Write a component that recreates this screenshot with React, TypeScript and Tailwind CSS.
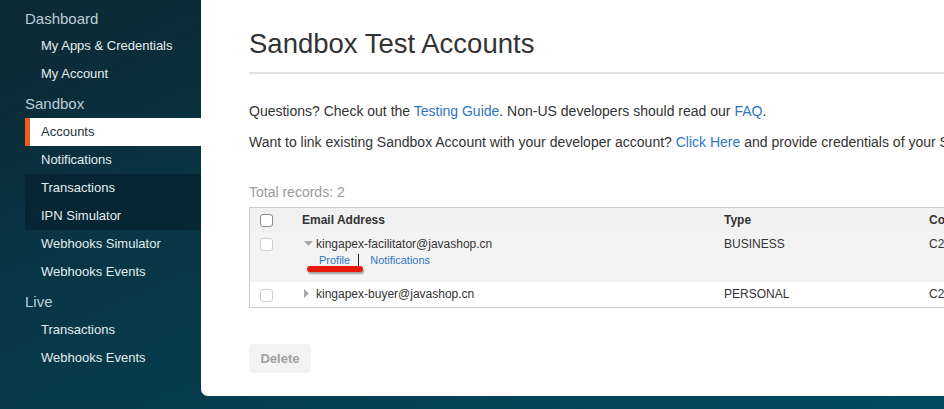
import React from "react";

const font = { fontFamily: '"Liberation Sans", Arial, sans-serif' };

function Header({ children, h }: { children: React.ReactNode; h: string }) {
  return (
    <div className={h + " flex items-center pl-[25px] text-[15px] text-[#bccfd7]"}>{children}</div>
  );
}

function Item({ children, active, dark }: { children: React.ReactNode; active?: boolean; dark?: boolean }) {
  if (active) {
    return (
      <div className="ml-[25px] h-[28px] flex items-center bg-white border-l-[5px] border-[#f05a1c] pl-[11px] text-[13px] text-[#1d3440]">
        {children}
      </div>
    );
  }
  return (
    <div
      className={
        "ml-[25px] h-[28px] flex items-center pl-[16px] text-[13px] text-[#e3ecef] " +
        (dark ? "bg-[#072532]/90" : "")
      }
    >
      {children}
    </div>
  );
}

function Checkbox({ strong }: { strong?: boolean }) {
  return (
    <div
      className={
        "w-[13px] h-[13px] rounded-[3px] bg-white border " +
        (strong ? "border-[#8a8a8a]" : "border-[#cfcfcf]")
      }
    />
  );
}

export default function App() {
  return (
    <div style={font} className="w-[944px] h-[409px] overflow-hidden flex bg-linear-to-br from-[#0c2833] via-[#063a4b] to-[#004b60]">
      <aside className="w-[201px] shrink-0 pt-[4px]">
        <Header h="h-[28px] pt-[3px]">Dashboard</Header>
        <Item>My Apps &amp; Credentials</Item>
        <Item>My Account</Item>
        <Header h="h-[30px] pt-[3px]">Sandbox</Header>
        <Item active>Accounts</Item>
        <Item>Notifications</Item>
        <Item dark>Transactions</Item>
        <Item dark>IPN Simulator</Item>
        <Item>Webhooks Simulator</Item>
        <Item>Webhooks Events</Item>
        <Header h="h-[30px] pt-[2px]">Live</Header>
        <Item>Transactions</Item>
        <Item>Webhooks Events</Item>
      </aside>
      <main className="flex-1 h-[396px] bg-white rounded-bl-[7px] overflow-hidden pl-[48px] text-[#333]">
        <h1 className="pt-[26px] h-[72px] text-[27.5px] leading-[36px] text-[#333] whitespace-nowrap">Sandbox Test Accounts</h1>
        <div className="h-[2px] bg-[#e2e2e2]" />
        <p className="mt-[27px] text-[14px] leading-[20px] whitespace-nowrap">
          Questions? Check out the <span className="text-[#2f76c0]">Testing Guide</span>. Non-US developers should read our{" "}
          <span className="text-[#2f76c0]">FAQ</span>.
        </p>
        <p className="mt-[11px] text-[14px] leading-[20px] whitespace-nowrap">
          Want to link existing Sandbox Account with your developer account? <span className="text-[#2f76c0]">Click Here</span> and
          provide credentials of your Sandbox Account.
        </p>
        <p className="mt-[30px] text-[14px] leading-[20px] text-[#9a9a9a] whitespace-nowrap">Total records: 2</p>
        <div className="mt-[5px] w-[820px] border border-[#cdcdcd] text-[12px] leading-[16px]">
          <div className="grid grid-cols-[53px_421px_205px_1fr] h-[24px] items-center bg-[#f1f1f1] font-bold text-[#333]">
            <div className="pl-[10px] flex"><Checkbox strong /></div>
            <div className="-ml-[1px]">Email Address</div>
            <div>Type</div>
            <div>Country</div>
          </div>
          <div className="grid grid-cols-[53px_421px_205px_1fr] h-[50px] bg-[#f3f3f3] pt-[4px]">
            <div className="pl-[10px] pt-[2px]"><Checkbox /></div>
            <div>
              <div className="flex items-center">
                <svg width="9" height="6" viewBox="0 0 9 6" className="ml-[1px] mr-[4px]">
                  <path d="M0 0 L9 0 L4.5 5 Z" fill="#a7a7a7" />
                </svg>
                <span className="-ml-[1px]">kingapex-facilitator@javashop.cn</span>
              </div>
              <div className="relative ml-[16px] flex items-center text-[11px] leading-[16px] text-[#2f76c0]">
                <span>Profile</span>
                <span className="ml-[8px] mr-[11px] w-[1px] h-[13px] bg-[#222]" />
                <span>Notifications</span>
                <span className="absolute left-[-12px] top-[14px] w-[56px] h-[6px] rounded-full bg-[#e81b0a] shadow-[1px_2px_2px_rgba(0,0,0,0.35)]" />
              </div>
            </div>
            <div>BUSINESS</div>
            <div>C2</div>
          </div>
          <div className="grid grid-cols-[53px_421px_205px_1fr] h-[25px] items-center bg-white pb-[2px]">
            <div className="pl-[10px] flex pt-[3px]"><Checkbox /></div>
            <div className="flex items-center">
              <svg width="6" height="9" viewBox="0 0 6 9" className="ml-[1px] mr-[6px]">
                <path d="M0 0 L5 4.5 L0 9 Z" fill="#a7a7a7" />
              </svg>
              <span>kingapex-buyer@javashop.cn</span>
            </div>
            <div>PERSONAL</div>
            <div>C2</div>
          </div>
        </div>
        <button className="mt-[36px] w-[62px] h-[29px] rounded-[4px] bg-[#f3f3f3] text-[13px] font-bold text-[#a0a0a0]">
          Delete
        </button>
      </main>
    </div>
  );
}
